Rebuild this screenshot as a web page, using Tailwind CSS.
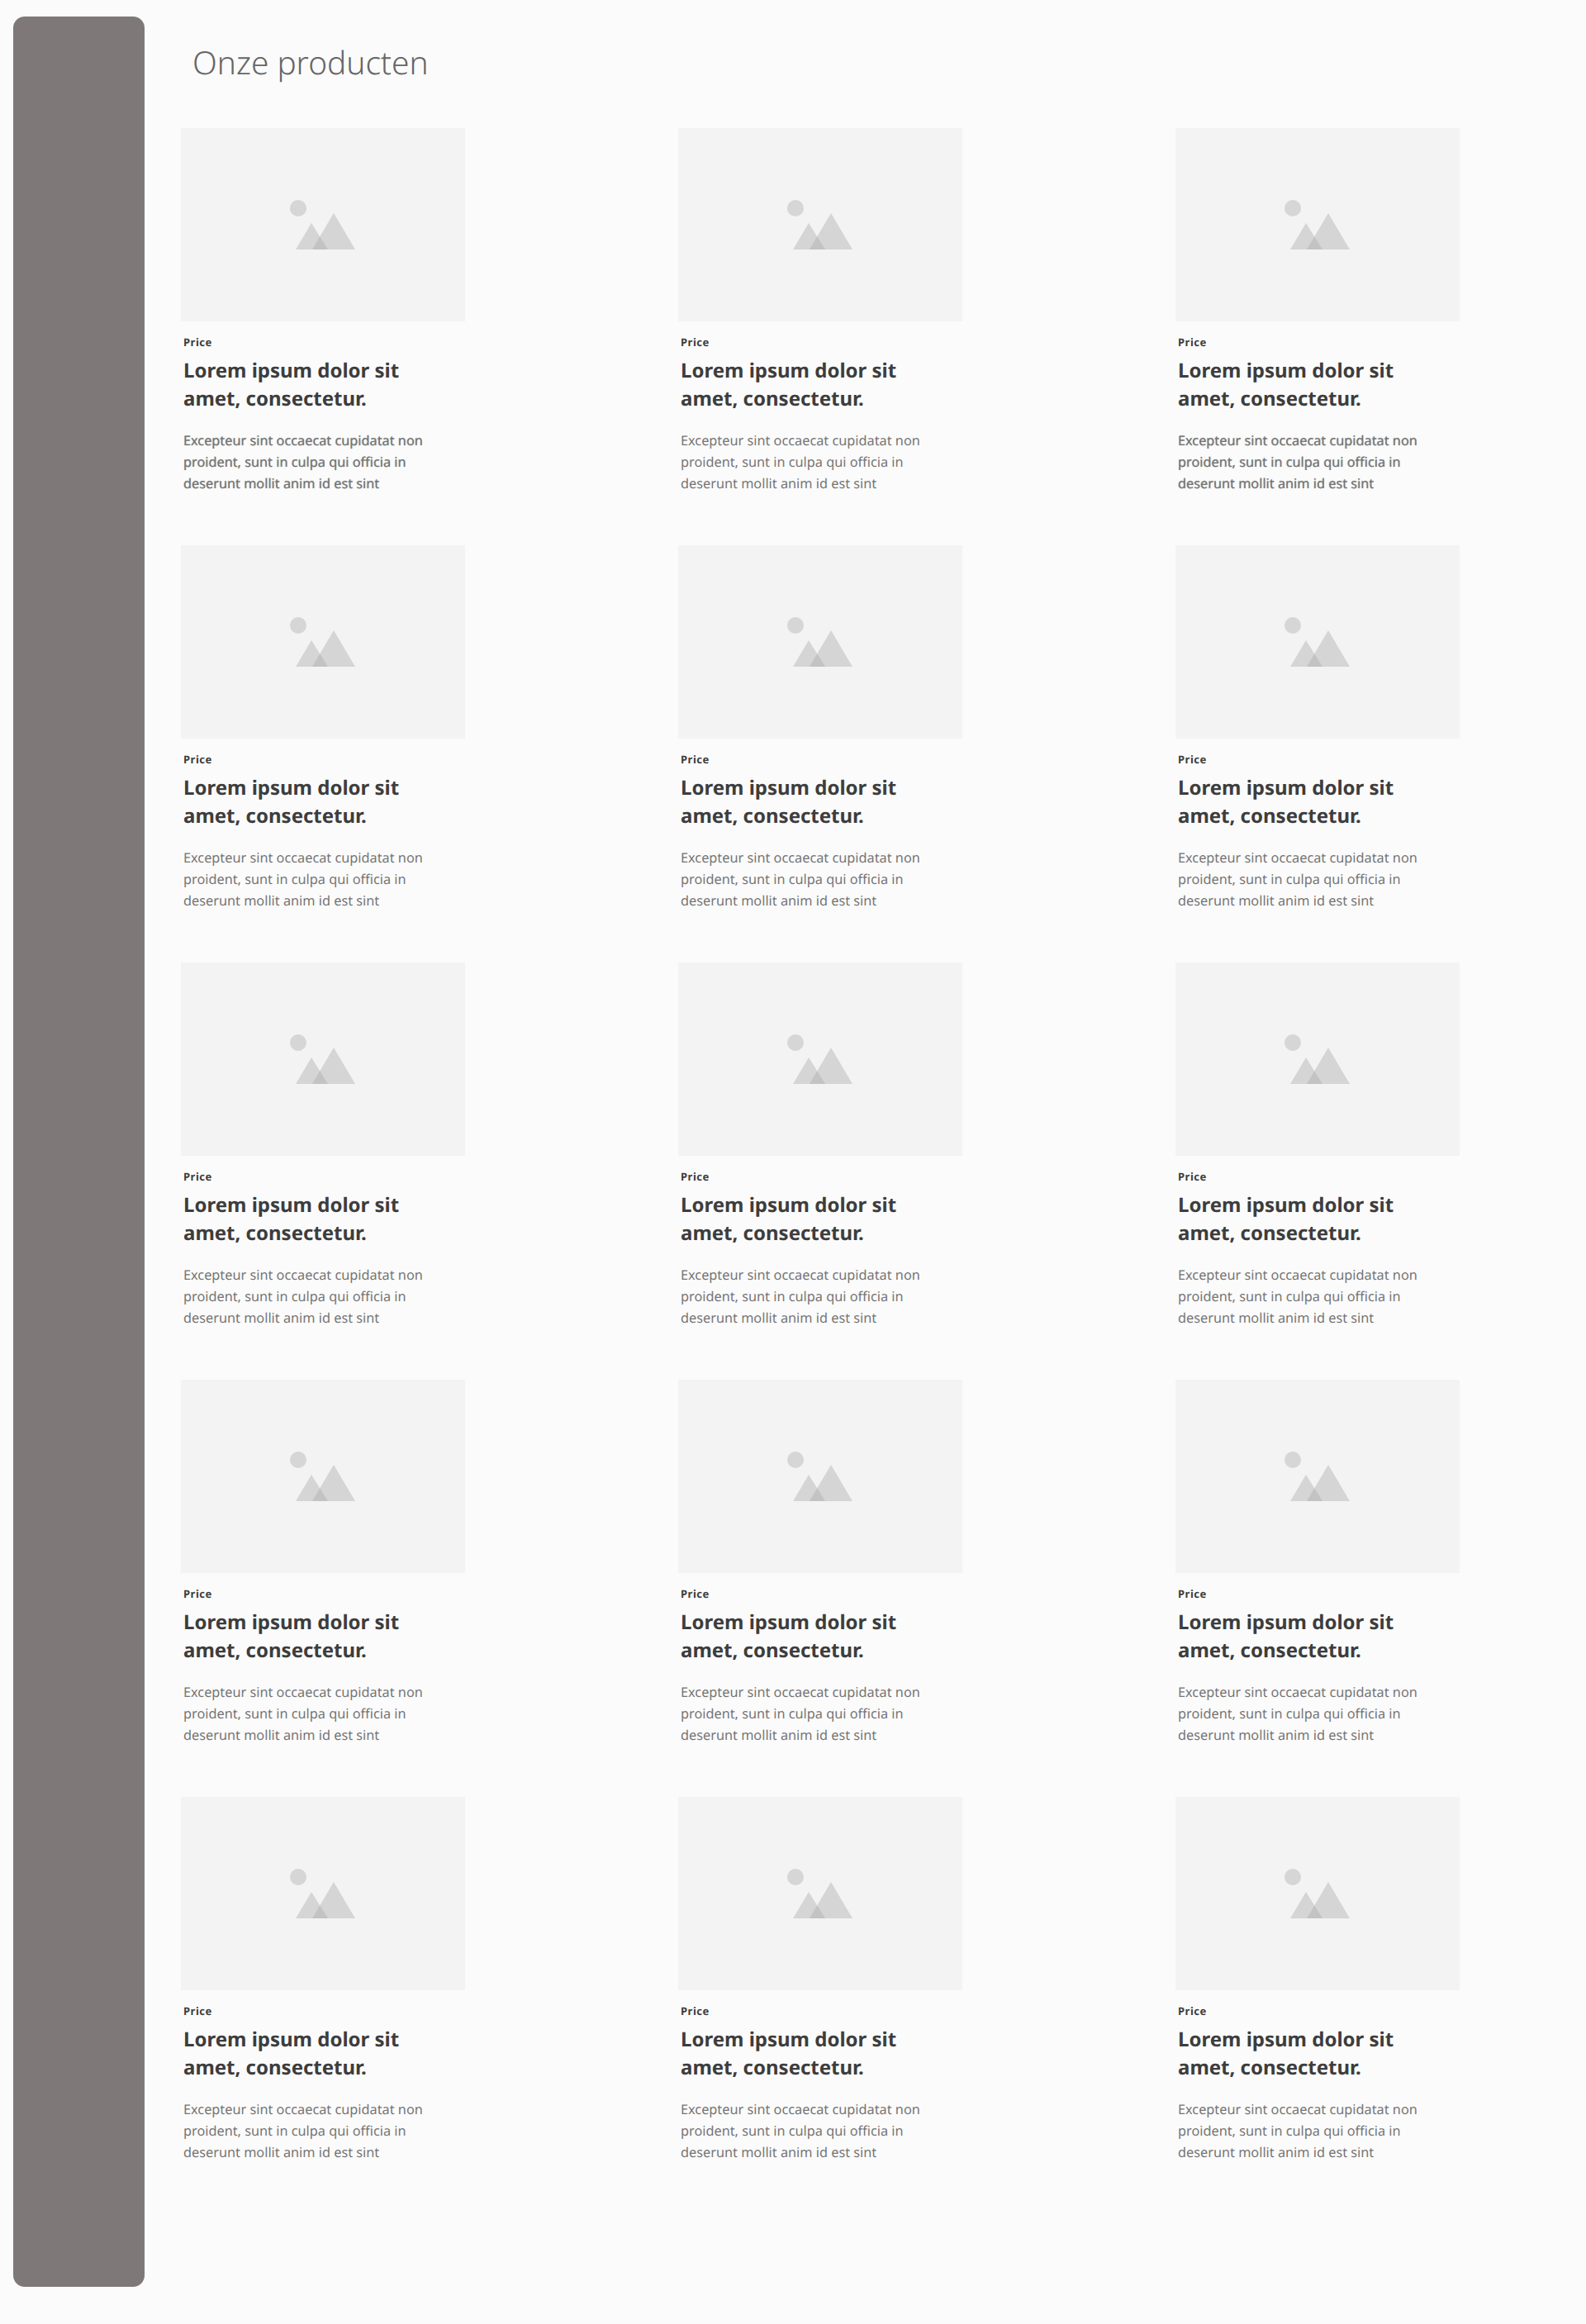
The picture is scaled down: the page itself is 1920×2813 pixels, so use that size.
<!DOCTYPE html>
<html lang="en">
  <head>
    <meta charset="UTF-8" />
    <title>Onze producten</title>
    <script src="https://cdn.jsdelivr.net/npm/@tailwindcss/browser@4"></script>
  </head>
  <body class="bg-[#fbfbfb] font-['Noto_Sans',sans-serif] [text-rendering:geometricPrecision]">
    <div class="flex h-[2813px] items-start">
      <aside class="w-[159px] h-[2748px] mt-5 ml-4 rounded-[14px] bg-[#7f7878]"></aside>
      <main class="ml-[44px] flex-1">
        <h1 class="ml-[14px] mt-[50px] h-[105px] text-[38.8px] leading-[52px] font-light text-[#666666]">Onze producten</h1>
        <div id="grid" class="grid grid-cols-[344px_344px_344px] gap-x-[258px]"></div>
      </main>
    </div>
    <template id="card">
      <article class="h-[505px]">
        <div class="w-[344px] h-[234px] bg-[#f3f3f3] flex items-center justify-center">
          <svg width="80" height="60" viewBox="0 0 80 60">
            <circle cx="10" cy="10" r="10" fill="#bdbdbd" fill-opacity="0.55" />
            <polygon points="7,60 26,28 46,60" fill="#a8a8a8" fill-opacity="0.4" />
            <polygon points="27,60 53,16 79,60" fill="#a8a8a8" fill-opacity="0.4" />
          </svg>
        </div>
        <div class="pl-[3px] pt-[16px]">
          <p class="text-[13px] leading-[18px] font-bold tracking-[0.5px] text-[#3c3c3c]">Price</p>
          <h2 class="mt-[9px] text-[24px] leading-[34px] font-bold text-[#3d3d3d] w-[300px]">Lorem ipsum dolor sit amet, consectetur.</h2>
          <p data-desc class="mt-[20px] text-[16.3px] leading-[26px] text-[#757575] w-[320px]">Excepteur sint occaecat cupidatat non proident, sunt in culpa qui officia in deserunt mollit anim id est sint</p>
        </div>
      </article>
    </template>
    <script>
      const grid = document.getElementById("grid");
      const card = document.getElementById("card");
      for (let i = 0; i < 15; i++) {
        const node = card.content.cloneNode(true);
        // first row, outer cards render heavier in the design
        if (i === 0 || i === 2) {
          node.querySelector("[data-desc]").classList.add("[text-shadow:0_0_1px_#9a9a9a]");
        }
        grid.appendChild(node);
      }
    </script>
  </body>
</html>
